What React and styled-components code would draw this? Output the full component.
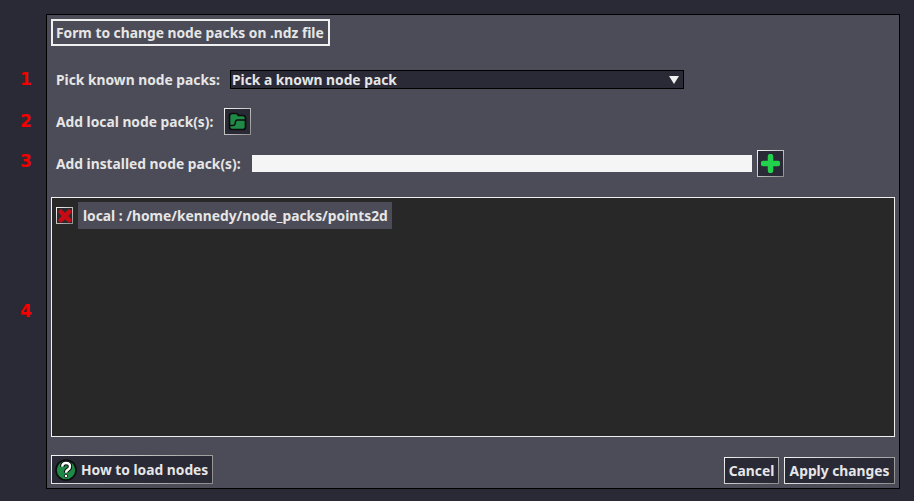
import React from 'react'
import styled, { createGlobalStyle } from 'styled-components'

const Global = createGlobalStyle`
  html, body { margin: 0; height: 100%; background: #2a2a36; }
  body {
    font-family: "Noto Sans", "DejaVu Sans", sans-serif;
    font-weight: 700;
    font-size: 13.8px;
    color: #e6e6e6;
  }
`

const Page = styled.div`
  position: relative;
  width: 914px;
  height: 501px;
  overflow: hidden;
  padding: 14px 0 0 46px;
  box-sizing: border-box;
`

const Marker = styled.span`
  position: absolute;
  left: 20px;
  top: ${props => props.top}px;
  color: #f40000;
  font-family: "DejaVu Sans", sans-serif;
  font-size: 17px;
  font-weight: 700;
  line-height: 20px;
`

const Panel = styled.div`
  width: 854px;
  height: 475px;
  box-sizing: border-box;
  border: 1px solid #000;
  background: #4c4c58;
  padding: 4px;
  display: flex;
  flex-direction: column;
`

const Title = styled.div`
  align-self: flex-start;
  width: 279px;
  height: 27px;
  box-sizing: border-box;
  border: 2px solid #f0f0f0;
  padding-left: 3px;
  line-height: 24px;
  white-space: nowrap;
`

const Rows = styled.div`
  display: flex;
  flex-direction: column;
  gap: 15px;
  margin: 20px 0;
`

const Row = styled.div`
  display: flex;
  align-items: center;
  height: 27px;
  padding-left: 5px;
`

const Label = styled.span`
  width: ${props => props.width}px;
  white-space: nowrap;
`

const Select = styled.div`
  width: 454px;
  height: 19px;
  box-sizing: border-box;
  border: 1px solid #000;
  background: #2a2a36;
  padding: 0 4px 0 1px;
  display: flex;
  align-items: center;
  justify-content: space-between;
  line-height: 17px;
`

const Arrow = styled.span`
  width: 0;
  height: 0;
  border-left: 5px solid transparent;
  border-right: 5px solid transparent;
  border-top: 8px solid #f0f0f0;
`

const Framed = styled.div`
  box-sizing: border-box;
  border: 1px solid;
  border-image: linear-gradient(135deg, #f4f4f4, #8c8c8c) 1;
  background: #2a2a36;
`

const IconButton = styled(Framed)`
  width: 27px;
  height: 27px;
  display: flex;
  align-items: center;
  justify-content: center;
`

const TextInput = styled.div`
  width: 500px;
  height: 17px;
  background: #f5f5f5;
  margin-right: 5px;
`

const List = styled.div`
  flex: 1;
  box-sizing: border-box;
  border: 1px solid #f0f0f0;
  background: #282828;
  padding: 4px;
`

const Item = styled.div`
  display: flex;
  align-items: center;
  gap: 5px;
`

const Check = styled(Framed)`
  width: 17px;
  height: 17px;
  display: flex;
  align-items: center;
  justify-content: center;
  background: #2a2a2e;
`

const ItemLabel = styled.span`
  width: 304px;
  height: 27px;
  line-height: 28px;
  padding: 0 5px;
  background: #4c4c58;
  white-space: nowrap;
`

const Footer = styled.div`
  display: flex;
  justify-content: space-between;
  align-items: flex-end;
  margin-top: 18px;
`

const Actions = styled.div`
  display: flex;
  gap: 5px;
`

const Button = styled(Framed)`
  width: ${props => props.width}px;
  height: ${props => props.height || 27}px;
  box-sizing: border-box;
  display: flex;
  align-items: center;
  justify-content: ${props => (props.$start ? 'flex-start' : 'center')};
  gap: 4px;
  padding-left: ${props => (props.$start ? 3 : 0)}px;
  white-space: nowrap;
`

function FolderIcon() {
  return (
    <svg width="19" height="19" viewBox="0 0 19 19">
      <path d="M1.5 4 Q1.5 1.5 4 1.5 H8 Q9.8 1.5 10.3 3.5 H15 Q17.5 3.5 17.5 6 V15 Q17.5 17.5 15 17.5 H4 Q1.5 17.5 1.5 15 Z" fill="#1f8a47" stroke="#0c0c0c" strokeWidth="1.7" />
      <path d="M2 13.5 H5 Q6.5 13.5 7 12 L7.5 9.5 Q8 8 9.5 8 H17" fill="none" stroke="#0c0c0c" strokeWidth="1.5" />
    </svg>
  )
}

function PlusIcon() {
  return (
    <svg width="19" height="19" viewBox="0 0 19 19">
      <path d="M9.5 2.5 V16.5 M2.5 9.5 H16.5" stroke="#22d24c" strokeWidth="5.5" strokeLinecap="round" />
    </svg>
  )
}

function CrossIcon() {
  return (
    <svg width="14" height="14" viewBox="0 0 14 14">
      <path d="M2.8 2.8 L11.2 11.2 M11.2 2.8 L2.8 11.2" stroke="#c80a14" strokeWidth="4.6" strokeLinecap="round" />
    </svg>
  )
}

function HelpIcon() {
  return (
    <svg width="22" height="22" viewBox="0 0 22 22">
      <circle cx="11" cy="11" r="10" fill="#1f8a47" stroke="#0c0c0c" strokeWidth="1.6" />
      <path d="M7.2 7.8 Q7.4 4 11 4 Q15 4 15 7.4 Q15 9.4 13 10.6 Q11 11.8 11 13.8" fill="none" stroke="#0c0c0c" strokeWidth="4.4" />
      <path d="M7.2 7.8 Q7.4 4 11 4 Q15 4 15 7.4 Q15 9.4 13 10.6 Q11 11.8 11 13.8" fill="none" stroke="#fff" strokeWidth="2.4" />
      <circle cx="11" cy="17" r="1.7" fill="#fff" stroke="#0c0c0c" strokeWidth="0.8" />
    </svg>
  )
}

export default function App() {
  return (
    <Page>
      <Global />
      <Marker top={69}>1</Marker>
      <Marker top={111}>2</Marker>
      <Marker top={151}>3</Marker>
      <Marker top={301}>4</Marker>

      <Panel>
        <Title>Form to change node packs on .ndz file</Title>

        <Rows>
          <Row>
            <Label width={174}>Pick known node packs:</Label>
            <Select>
              <span>Pick a known node pack</span>
              <Arrow />
            </Select>
          </Row>
          <Row>
            <Label width={168}>Add local node pack(s):</Label>
            <IconButton><FolderIcon /></IconButton>
          </Row>
          <Row>
            <Label width={196}>Add installed node pack(s):</Label>
            <TextInput />
            <IconButton><PlusIcon /></IconButton>
          </Row>
        </Rows>

        <List>
          <Item>
            <Check><CrossIcon /></Check>
            <ItemLabel>local : /home/kennedy/node_packs/points2d</ItemLabel>
          </Item>
        </List>

        <Footer>
          <Button width={162} height={29} $start>
            <HelpIcon />
            How to load nodes
          </Button>
          <Actions>
            <Button width={55}>Cancel</Button>
            <Button width={111}>Apply changes</Button>
          </Actions>
        </Footer>
      </Panel>
    </Page>
  )
}
